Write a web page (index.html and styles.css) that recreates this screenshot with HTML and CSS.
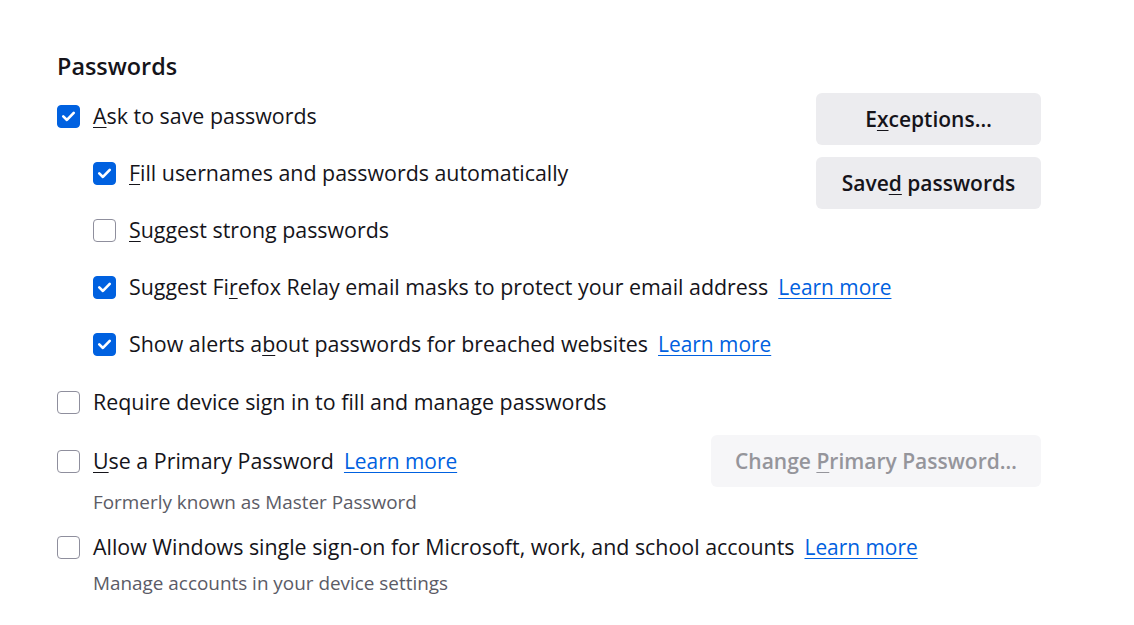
FILE: index.html
```html
<!DOCTYPE html>
<html lang="en">
<head>
<meta charset="utf-8">
<title>Passwords</title>
<link rel="stylesheet" href="styles.css">
</head>
<body>
<main class="page">
  <h1 class="heading">Passwords</h1>

  <section class="top">
    <div class="top-left">
      <label class="row">
        <span class="box checked"><svg viewBox="0 0 16 16"><path d="M4 8.3 L6.8 11 L12 5.6"/></svg></span>
        <span class="label"><u>A</u>sk to save passwords</span>
      </label>
      <label class="row indent">
        <span class="box checked"><svg viewBox="0 0 16 16"><path d="M4 8.3 L6.8 11 L12 5.6"/></svg></span>
        <span class="label"><u>F</u>ill usernames and passwords automatically</span>
      </label>
      <label class="row indent">
        <span class="box"></span>
        <span class="label"><u>S</u>uggest strong passwords</span>
      </label>
      <label class="row indent">
        <span class="box checked"><svg viewBox="0 0 16 16"><path d="M4 8.3 L6.8 11 L12 5.6"/></svg></span>
        <span class="label">Suggest Fi<u>r</u>efox Relay email masks to protect your email address</span>
        <a class="link" href="#">Learn more</a>
      </label>
      <label class="row indent">
        <span class="box checked"><svg viewBox="0 0 16 16"><path d="M4 8.3 L6.8 11 L12 5.6"/></svg></span>
        <span class="label">Show alerts a<u>b</u>out passwords for breached websites</span>
        <a class="link" href="#">Learn more</a>
      </label>
    </div>
    <div class="top-right">
      <button class="btn">E<u>x</u>ceptions…</button>
      <button class="btn">Save<u>d</u> passwords</button>
    </div>
  </section>

  <label class="row row-device">
    <span class="box"></span>
    <span class="label">Require device sign in to fill and manage passwords</span>
  </label>

  <div class="primary">
    <label class="row">
      <span class="box"></span>
      <span class="label"><u>U</u>se a Primary Password</span>
      <a class="link" href="#">Learn more</a>
    </label>
    <button class="btn btn-disabled" disabled>Change <u>P</u>rimary Password…</button>
  </div>
  <p class="desc desc-primary">Formerly known as Master Password</p>

  <label class="row row-sso">
    <span class="box"></span>
    <span class="label">Allow Windows single sign-on for Microsoft, work, and school accounts</span>
    <a class="link" href="#">Learn more</a>
  </label>
  <p class="desc desc-sso">Manage accounts in your device settings</p>
</main>
</body>
</html>
```

FILE: styles.css
```css
* { box-sizing: border-box; }

html, body {
  margin: 0;
  padding: 0;
  background: #ffffff;
}

body {
  font-family: "Open Sans", "Noto Sans", "Liberation Sans", sans-serif;
  color: #15141a;
}

.page {
  width: 984px;
  margin-left: 57px;
  padding-top: 49px;
}

.heading {
  margin: 0 0 16px 0;
  font-size: 23.4px;
  font-weight: 600;
  line-height: 34px;
}

.top {
  display: flex;
  justify-content: space-between;
  align-items: flex-start;
}

.top-left {
  flex: 1;
  min-width: 0;
  display: flex;
  flex-direction: column;
  gap: 23px;
}

.top-right {
  flex: none;
  display: flex;
  flex-direction: column;
  gap: 12px;
  margin-top: -6px;
}

.row {
  display: flex;
  align-items: center;
  height: 34px;
  font-size: 21.4px;
  line-height: 34px;
  white-space: nowrap;
}

.indent {
  margin-left: 36px;
}

.box {
  flex: none;
  width: 23px;
  height: 23px;
  border: 1px solid #8f8f9d;
  border-radius: 4px;
  margin-right: 13px;
  background: #fff;
  display: flex;
  align-items: center;
  justify-content: center;
}

.box.checked {
  background: #0061e0;
  border-color: #0061e0;
}

.box svg {
  width: 22px;
  height: 22px;
  fill: none;
  stroke: #fff;
  stroke-width: 2;
  stroke-linecap: round;
  stroke-linejoin: round;
}

.label u, .btn u {
  text-decoration-thickness: 1px;
  text-underline-offset: 3px;
}

.link {
  margin-left: 10px;
  font-size: 20.9px;
  color: #0061e0;
  text-decoration: underline;
  text-decoration-thickness: 1px;
  text-underline-offset: 3px;
}

.btn {
  font-family: inherit;
  font-size: 21px;
  font-weight: 600;
  color: #15141a;
  background: #ececef;
  border: none;
  border-radius: 6px;
  height: 52px;
  width: 225px;
  padding: 0 16px;
  white-space: nowrap;
}

.btn-disabled {
  width: 330px;
  background: #f6f6f8;
  color: #95959b;
}

.row-device {
  margin-top: 24px;
}

.primary {
  margin-top: 16px;
  display: flex;
  justify-content: space-between;
  align-items: center;
  height: 52px;
}

.desc {
  margin: 0;
  font-size: 18.9px;
  line-height: 26px;
  color: #5b5b66;
  margin-left: 36px;
}

.desc-primary {
  margin-top: 2px;
}

.row-sso {
  margin-top: 15px;
}

.desc-sso {
  margin-top: 6px;
}
```
